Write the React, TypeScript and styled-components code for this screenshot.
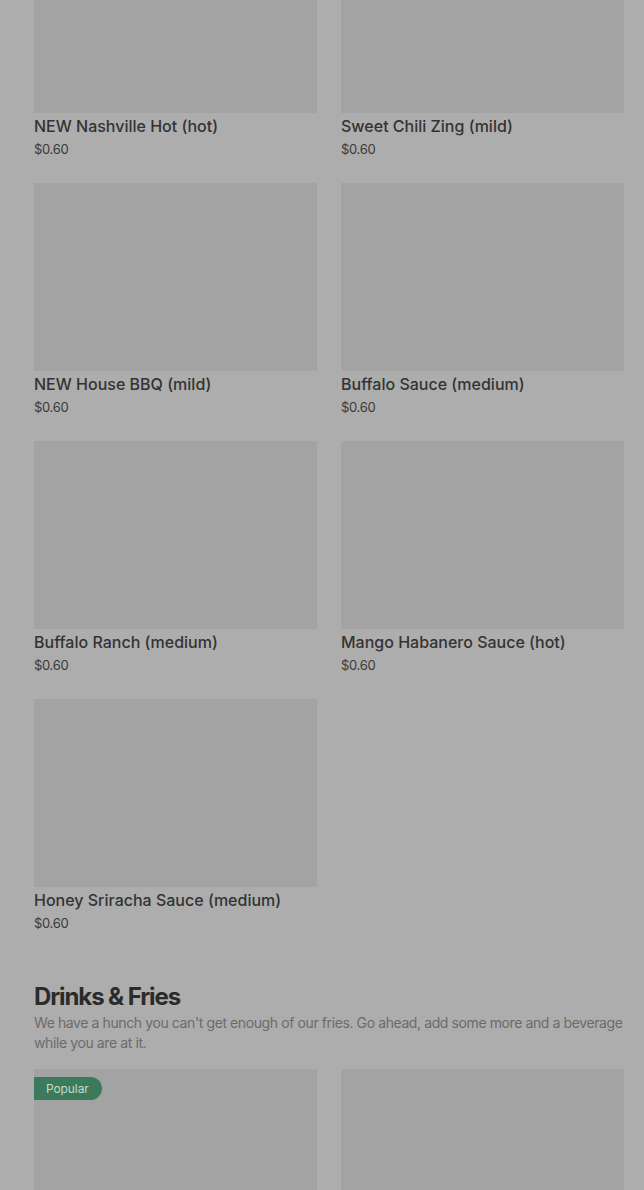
import React from "react";
import styled, { createGlobalStyle } from "styled-components";

const GlobalStyle = createGlobalStyle`
	html, body {
		margin: 0;
		padding: 0;
		background: #adadad;
		font-family: Inter, "Noto Sans", "Liberation Sans", sans-serif;
		overflow: hidden;
	}
`;

type Item = { name?: string; price?: string; popular?: boolean };

const sauces: Item[] = [
	{ name: "NEW Nashville Hot (hot)", price: "$0.60" },
	{ name: "Sweet Chili Zing (mild)", price: "$0.60" },
	{ name: "NEW House BBQ (mild)", price: "$0.60" },
	{ name: "Buffalo Sauce (medium)", price: "$0.60" },
	{ name: "Buffalo Ranch (medium)", price: "$0.60" },
	{ name: "Mango Habanero Sauce (hot)", price: "$0.60" },
	{ name: "Honey Sriracha Sauce (medium)", price: "$0.60" },
];

// only the tops of these cards are in view
const drinks: Item[] = [{ popular: true }, {}];

function Card({ item }: { item: Item }) {
	return (
		<CardBox>
			<Picture>{item.popular && <Badge>Popular</Badge>}</Picture>
			{item.name && <Name>{item.name}</Name>}
			{item.price && <Price>{item.price}</Price>}
		</CardBox>
	);
}

export default function App() {
	return (
		<>
			<GlobalStyle />
			<Page>
				<Grid>
					{sauces.map((s, i) => (
						<Card key={i} item={s} />
					))}
				</Grid>
				<Section>
					<Heading>Drinks &amp; Fries</Heading>
					<Description>
						We have a hunch you can't get enough of our fries. Go ahead, add
						some more and a beverage while you are at it.
					</Description>
					<Grid>
						{drinks.map((d, i) => (
							<Card key={i} item={d} />
						))}
					</Grid>
				</Section>
			</Page>
		</>
	);
}

const Page = styled.div`
	padding: 0 20px 0 34px;
	margin-top: -75px;
	height: 1265px;
	overflow: hidden;
	color: #2e2e2e;
`;

const Grid = styled.div`
	display: grid;
	grid-template-columns: 1fr 1fr;
	column-gap: 24px;
	row-gap: 25px;
`;

const CardBox = styled.div`
	display: flex;
	flex-direction: column;
`;

const Picture = styled.div`
	position: relative;
	height: 188px;
	background: #a3a3a3;
`;

const Badge = styled.span`
	position: absolute;
	top: 8px;
	left: 0;
	height: 23px;
	line-height: 23px;
	padding: 0 13px 0 12px;
	border-radius: 0 12px 12px 0;
	background: #3b7b5b;
	color: #c4d9cb;
	font-size: 12px;
	letter-spacing: -0.1px;
`;

const Name = styled.div`
	margin-top: 3px;
	font-size: 16px;
	line-height: 20px;
	font-weight: 500;
	color: #333333;
`;

const Price = styled.div`
	margin-top: 4px;
	font-size: 13px;
	line-height: 18px;
	letter-spacing: -0.3px;
	color: #3a3a3a;
`;

const Section = styled.section`
	margin-top: 51px;
`;

const Heading = styled.h2`
	margin: 0;
	font-size: 24px;
	line-height: 28px;
	font-weight: 700;
	letter-spacing: -1.1px;
	color: #2b2b2b;
`;

const Description = styled.p`
	margin: 2px 0 16px;
	font-size: 14px;
	line-height: 20px;
	letter-spacing: -0.4px;
	color: #6b6b6b;
`;
